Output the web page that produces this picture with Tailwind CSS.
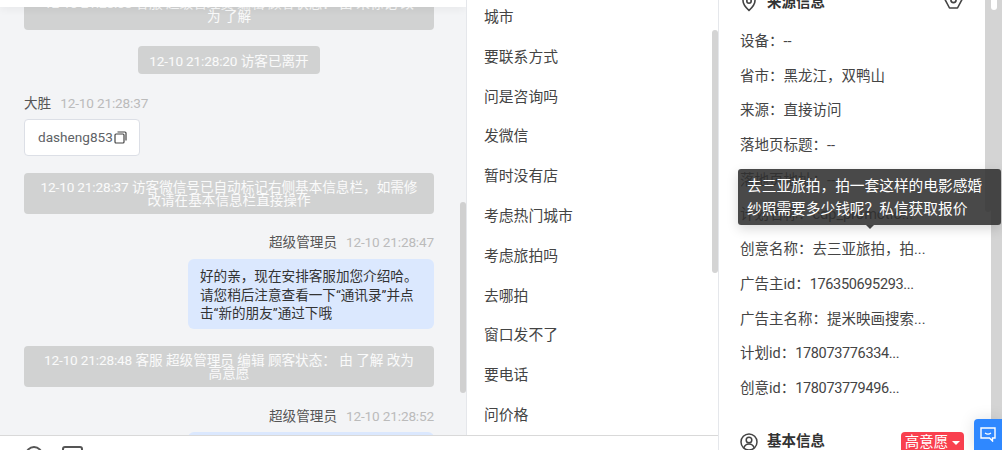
<!DOCTYPE html>
<html lang="zh">
<head>
<meta charset="utf-8">
<script src="https://cdn.jsdelivr.net/npm/@tailwindcss/browser@4"></script>
<title>会话</title>
</head>
<body class="w-[1002px] h-[450px] overflow-hidden bg-white font-['Roboto','Noto_Sans_CJK_SC',sans-serif] text-[#333]">
<div class="relative flex w-[1002px] h-[450px] overflow-hidden">

  <!-- left + middle group -->
  <div class="flex flex-col w-[718px] h-[450px] shrink-0">
    <div class="flex h-[435px] overflow-hidden">
      <!-- chat -->
      <section class="relative w-[466px] h-[435px] shrink-0 bg-[#f3f4f6] overflow-hidden text-[13.6px]">
        <div class="relative z-10 h-[7px] bg-white shadow-[0_2px_8px_rgba(0,0,0,0.06)]"></div>
        <div class="flex flex-col items-start mt-[-18px] pl-6 w-[434px]">
          <div class="w-[410px] h-[41px] rounded-sm bg-[#d1d2d2] text-white/90 text-center leading-[13px] pt-[8px] whitespace-nowrap overflow-hidden">
            <p><span class="tracking-[-0.15px]">12-10 21:28:08</span> 客服 超级管理员 编辑 顾客状态： 由 未标记 改</p><p>为 了解</p>
          </div>
          <div class="self-center mt-4 h-[28px] w-[182px] rounded-sm bg-[#d1d2d2] text-white/90 text-center leading-[30px] whitespace-nowrap"><span class="tracking-[-0.15px]">12-10 21:28:20</span> 访客已离开</div>
          <div class="flex items-center gap-[9px] mt-[18px] h-[22px] leading-[22px]"><span class="text-[#555]">大胜</span><span class="text-[#bbb] tracking-[-0.15px]">12-10 21:28:37</span></div>
          <div class="flex items-center mt-[5px] h-[37px] w-[116px] rounded border border-[#dcdfe6] bg-white pl-[13px] text-[#606266]">dasheng853<svg class="w-[13px] h-[13px] ml-[1px] shrink-0" viewBox="0 0 13 13" fill="none" stroke="#444" stroke-width="1.2"><rect x="1" y="3" width="9" height="9" rx="1"/><path d="M3.5 1h7.5a1 1 0 0 1 1 1v7.5"/></svg></div>
          <div class="w-[410px] h-[41px] mt-[17px] rounded-sm bg-[#d1d2d2] text-white/90 text-center leading-[13px] pt-[8px] whitespace-nowrap">
            <p><span class="tracking-[-0.15px]">12-10 21:28:37</span> 访客微信号已自动标记右侧基本信息栏，如需修</p><p>改请在基本信息栏直接操作</p>
          </div>
          <div class="self-end flex items-center gap-[9px] mt-[17px] h-[22px] leading-[22px]"><span class="text-[#555]">超级管理员</span><span class="text-[#bbb] tracking-[-0.15px]">12-10 21:28:47</span></div>
          <div class="self-end mt-[6px] w-[246px] h-[70px] rounded-md bg-[#dbe8fe] pl-[12px] pt-[8px] leading-[18.5px] text-[#333] whitespace-nowrap">
            <p>好的亲，现在安排客服加您介绍哈。</p><p>请您稍后注意查看一下“通讯录”并点</p><p>击“新的朋友”通过下哦</p>
          </div>
          <div class="w-[410px] h-[41px] mt-[17px] rounded-sm bg-[#d1d2d2] text-white/90 text-center leading-[13px] pt-[8px] whitespace-nowrap">
            <p><span class="tracking-[-0.15px]">12-10 21:28:48</span> 客服 超级管理员 编辑 顾客状态： 由 了解 改为</p><p>高意愿</p>
          </div>
          <div class="self-end flex items-center gap-[9px] mt-[18px] h-[22px] leading-[22px]"><span class="text-[#555]">超级管理员</span><span class="text-[#bbb] tracking-[-0.15px]">12-10 21:28:52</span></div>
          <div class="self-end mt-[5px] w-[246px] h-[40px] rounded-md bg-[#dbe8fe]"></div>
        </div>
        <div class="absolute left-[460px] top-[202px] w-[6px] h-[191px] rounded-full bg-[#d0d0d0]"></div>
      </section>
      <!-- phrases -->
      <section class="relative w-[252px] h-[435px] shrink-0 border-l border-[#e5e7eb] overflow-hidden bg-white text-[14.8px]">
        <ul class="mt-[-2px] pl-[17px] text-[#444]">
          <li class="h-[39.8px] leading-[39.8px]">城市</li>
          <li class="h-[39.8px] leading-[39.8px]">要联系方式</li>
          <li class="h-[39.8px] leading-[39.8px]">问是咨询吗</li>
          <li class="h-[39.8px] leading-[39.8px]">发微信</li>
          <li class="h-[39.8px] leading-[39.8px]">暂时没有店</li>
          <li class="h-[39.8px] leading-[39.8px]">考虑热门城市</li>
          <li class="h-[39.8px] leading-[39.8px]">考虑旅拍吗</li>
          <li class="h-[39.8px] leading-[39.8px]">去哪拍</li>
          <li class="h-[39.8px] leading-[39.8px]">窗口发不了</li>
          <li class="h-[39.8px] leading-[39.8px]">要电话</li>
          <li class="h-[39.8px] leading-[39.8px]">问价格</li>
        </ul>
        <div class="absolute left-[245px] top-[30px] w-[6px] h-[243px] rounded-full bg-[#d4d4d4]"></div>
      </section>
    </div>
    <!-- footer -->
    <div class="flex items-start gap-[19px] h-[15px] border-t border-[#d9d9d9] bg-white pl-[25px] pt-[10px] overflow-hidden">
      <div class="w-[18px] h-[18px] shrink-0 rounded-full border-2 border-[#555]"></div>
      <div class="w-[21px] h-[18px] shrink-0 rounded-[3px] border-2 border-[#555]"></div>
    </div>
  </div>

  <!-- info -->
  <aside class="flex flex-col w-[267px] h-[450px] shrink-0 border-l border-[#e5e7eb] bg-white overflow-hidden text-[#444] text-[14.5px]">
    <div class="flex items-center justify-between h-[20px] mt-[-7px] pl-[21px] pr-[22px] shrink-0">
      <div class="flex items-center gap-[9px] font-bold text-[#333]">
        <svg class="w-[18px] h-[20px] shrink-0" viewBox="0 0 18 20" fill="none" stroke="#444" stroke-width="1.6"><path d="M9 17.500c4-3.800 6-6.500 6-9.800a6 6 0 0 0-12 0c0 3.300 2 6 6 9.800z"/><circle cx="9" cy="8" r="2.200"/></svg>
        <span>来源信息</span>
      </div>
      <svg class="w-[19px] h-[20px] shrink-0 mt-[-6px]" viewBox="0 0 19 20" fill="none" stroke="#444" stroke-width="1.600"><path d="M5.500 2h8l4.500 7.500-4.500 8.500h-8L1 9.500z" stroke-linejoin="round"/><circle cx="9.500" cy="10" r="2.600"/></svg>
    </div>
    <ul class="mt-[12px] pl-[21px] shrink-0">
      <li class="h-[34.7px] leading-[34.7px]">设备：--</li>
      <li class="h-[34.7px] leading-[34.7px]">省市：黑龙江，双鸭山</li>
      <li class="h-[34.7px] leading-[34.7px]">来源：直接访问</li>
      <li class="h-[34.7px] leading-[34.7px]">落地页标题：--</li>
      <li class="h-[34.7px] leading-[34.7px]">落地页地址：--</li>
      <li class="h-[34.7px] leading-[34.7px]">计划名称：cdp_promotio...</li>
      <li class="h-[34.7px] leading-[34.7px]">创意名称：去三亚旅拍，拍...</li>
      <li class="h-[34.7px] leading-[34.7px]">广告主id：<span class="tracking-[-0.35px]">176350695293...</span></li>
      <li class="h-[34.7px] leading-[34.7px]">广告主名称：提米映画搜索...</li>
      <li class="h-[34.7px] leading-[34.7px]">计划id：<span class="tracking-[-0.35px]">178073776334...</span></li>
      <li class="h-[34.7px] leading-[34.7px]">创意id：<span class="tracking-[-0.35px]">178073779496...</span></li>
    </ul>
    <div class="flex items-center justify-between mt-[25px] pl-[21px] pr-[21px] h-[20px] shrink-0">
      <div class="flex items-center gap-[9px] font-bold text-[#333]">
        <svg class="w-[18px] h-[18px] shrink-0" viewBox="0 0 18 18" fill="none" stroke="#444" stroke-width="1.500"><circle cx="9" cy="9" r="8"/><circle cx="9" cy="7" r="2.800"/><path d="M3.800 15c.8-2.500 2.800-4 5.200-4s4.400 1.500 5.200 4"/></svg>
        <span>基本信息</span>
      </div>
      <div class="flex items-center justify-center w-[63px] h-[22px] mt-[3px] rounded-sm bg-[#f9404f] text-white gap-[4px] whitespace-nowrap"><span>高意愿</span><span class="w-0 h-0 border-x-[4px] border-x-transparent border-t-[4px] border-t-white"></span></div>
    </div>
  </aside>

  <!-- page scrollbar -->
  <div class="relative w-[17px] h-[450px] shrink-0 bg-white">
    <div class="absolute left-0 top-0 w-[6px] h-[212px] rounded-b-full bg-[#d4d4d4]"></div>
    <div class="absolute left-[6px] top-0 w-[11px] h-[450px] bg-[#d4d4d4]"></div>
    <div class="absolute left-[6px] top-0 w-[6px] h-[10px] rounded-b-sm bg-white"></div>
  </div>

  <!-- tooltip -->
  <div class="absolute left-[738px] top-[169px] z-20 w-[263px] h-[56px] rounded-[3px] bg-[#303030]/88 pl-[9px] text-white text-[14.7px] leading-[23px] whitespace-nowrap shadow-[0_4px_12px_rgba(0,0,0,0.15)]">
    <p class="mt-[6px]">去三亚旅拍，拍一套这样的电影感婚</p>
    <p>纱照需要多少钱呢？私信获取报价</p>
    <span class="absolute left-[128px] top-[56px] w-0 h-0 border-x-[4px] border-x-transparent border-t-[4px] border-t-[#303030]/90"></span>
  </div>

  <!-- floating chat button -->
  <div class="absolute left-[974px] top-[419px] z-20 flex justify-center w-[28px] h-[31px] pt-[8px] rounded-tl-[4px] bg-[#2f88ff] shadow-[0_0_16px_rgba(0,0,0,0.12)]">
    <svg class="w-[16px] h-[15px]" viewBox="0 0 16 15" fill="none" stroke="#fff" stroke-width="1.400"><path d="M1 1h14v10h-2.500v3l-3-3H1z"/><path d="M5 6c1.800 1.300 4.200 1.300 6 0" stroke-width="1.200"/></svg>
  </div>
</div>
</body>
</html>
